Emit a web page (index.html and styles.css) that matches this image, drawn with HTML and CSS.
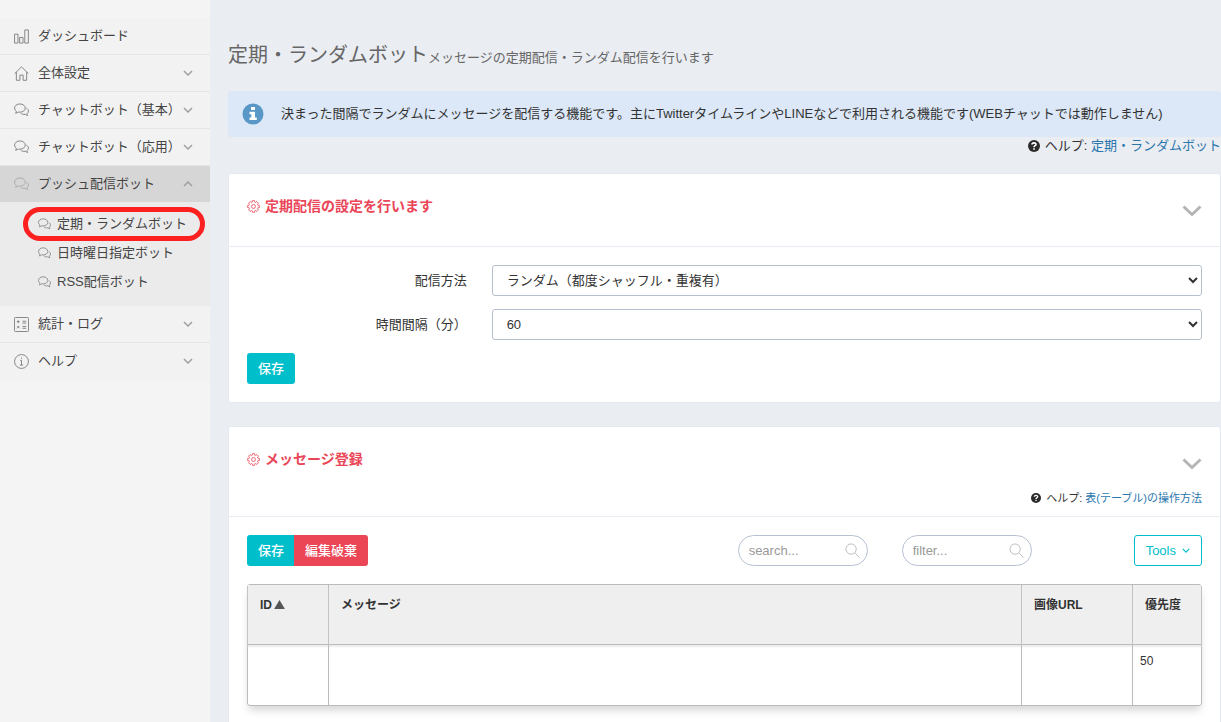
FILE: index.html
```html
<!DOCTYPE html>
<html lang="ja">
<head>
<meta charset="utf-8">
<meta name="viewport" content="width=device-width, initial-scale=1">
<title>定期・ランダムボット</title>
<link rel="stylesheet" href="styles.css">
</head>
<body>
<svg class="defs" aria-hidden="true">
  <symbol id="i-bubbles" viewBox="0 0 16 16"><path d="M6.3 1c3.200 0 5.700 1.900 5.700 4.400s-2.500 4.400-5.700 4.400c-.6 0-1.200-.1-1.700-.2-.8.700-1.800 1.200-3 1.300.5-.6.800-1.300.900-2.100C1.300 8 .6 6.800.6 5.400.600 2.900 3.100 1 6.300 1z"/><path d="M13.200 5.600c1.300.6 2.200 1.700 2.200 3 0 1-.6 2-1.500 2.600 0 .8.300 1.500.8 2-1.100-.1-2-.5-2.700-1.100-1.900.3-3.800-.2-4.900-1.400"/></symbol>
  <symbol id="i-down" viewBox="0 0 10 6"><path d="M1 1l4 4 4-4"/></symbol>
  <symbol id="i-up" viewBox="0 0 10 6"><path d="M1 5l4-4 4 4"/></symbol>
  <symbol id="i-toggle" viewBox="0 0 20 12"><path d="M1.500 1.500l8.500 8 8.500-8"/></symbol>
  <symbol id="i-gear" viewBox="0 0 16 16"><path d="M6.600.83L9.400.83 9.600 2.740 10.590 3.150 12.080 1.940 14.060 3.920 12.850 5.410 13.260 6.400 15.170 6.600 15.170 9.400 13.260 9.600 12.850 10.590 14.060 12.080 12.080 14.060 10.590 12.850 9.600 13.260 9.400 15.170 6.600 15.170 6.400 13.260 5.410 12.850 3.920 14.060 1.940 12.080 3.150 10.590 2.740 9.600.83 9.400.83 6.600 2.740 6.400 3.150 5.410 1.940 3.920 3.920 1.940 5.410 3.150 6.400 2.740z"/><circle cx="8" cy="8" r="2.400"/></symbol>
  <symbol id="i-search" viewBox="0 0 16 16"><circle cx="6.500" cy="6.500" r="5.500"/><path d="M10.500 10.500L15.500 15.500"/></symbol>
  <symbol id="i-help" viewBox="0 0 12 12"><circle cx="6" cy="6" r="6" fill="#2b2b2b"/><path d="M4 4.600C4 2.300 8 2.300 8 4.500 8 5.700 6 5.700 6 7.200" fill="none" stroke="#fff" stroke-width="1.600"/><path d="M5.200 8.200h1.600v1.500H5.200z" fill="#fff"/></symbol>
</svg>
<div class="layout">
  <nav class="sidebar">
    <ul class="menu">
      <li><a class="item" href="#"><svg class="icon" viewBox="0 0 16 16"><path d="M.6 5.500h3.600v9.500H.6zM6 9h3.600v6H6zM11.500 1h3.800v14h-3.800z"/></svg><span>ダッシュボード</span></a></li>
      <li><a class="item" href="#"><svg class="icon" viewBox="0 0 16 16"><path d="M.7 8L8 .9 15.300 8M2.500 6.500v8.700h3.800V9.700h3.400v5.500h3.800V6.500"/></svg><span>全体設定</span><svg class="arrow"><use href="#i-down"/></svg></a></li>
      <li><a class="item" href="#"><svg class="icon"><use href="#i-bubbles"/></svg><span>チャットボット（基本）</span><svg class="arrow"><use href="#i-down"/></svg></a></li>
      <li><a class="item" href="#"><svg class="icon"><use href="#i-bubbles"/></svg><span>チャットボット（応用）</span><svg class="arrow"><use href="#i-down"/></svg></a></li>
      <li class="open"><a class="item" href="#"><svg class="icon"><use href="#i-bubbles"/></svg><span>プッシュ配信ボット</span><svg class="arrow"><use href="#i-up"/></svg></a>
        <ul class="submenu">
          <li><a class="subitem current" href="#"><svg class="icon"><use href="#i-bubbles"/></svg><span>定期・ランダムボット</span></a></li>
          <li><a class="subitem" href="#"><svg class="icon"><use href="#i-bubbles"/></svg><span>日時曜日指定ボット</span></a></li>
          <li><a class="subitem" href="#"><svg class="icon"><use href="#i-bubbles"/></svg><span>RSS配信ボット</span></a></li>
        </ul>
      </li>
      <li><a class="item" href="#"><svg class="icon" viewBox="0 0 16 16"><rect x=".5" y=".5" width="15" height="15" rx="1"/><path d="M3 5h3M4.500 3.500v3M9 4.500h4M9 6.500h4M3.300 9.500l2.500 2.500M5.800 9.500L3.300 12M9 10h4M9 12h4"/></svg><span>統計・ログ</span><svg class="arrow"><use href="#i-down"/></svg></a></li>
      <li><a class="item" href="#"><svg class="icon" viewBox="0 0 16 16"><circle cx="8" cy="8" r="7.400"/><path d="M6.500 6.800H8v5M6.300 11.800h3.500M8 3.800v1.300"/></svg><span>ヘルプ</span><svg class="arrow"><use href="#i-down"/></svg></a></li>
    </ul>
  </nav>
  <main class="main">
    <h1 class="title">定期・ランダムボット<small>メッセージの定期配信・ランダム配信を行います</small></h1>
    <div class="note">
      <svg class="note-icon" viewBox="0 0 22 22"><circle cx="11" cy="11" r="10.500" fill="#5897c6"/><path d="M9 4h4v3H9zM7.500 8.700H13v5.800h1.800V17H7.500v-2.500h1.800v-3.300H7.500z" fill="#fff"/></svg>
      <p>決まった間隔でランダムにメッセージを配信する機能です。主にTwitterタイムラインやLINEなどで利用される機能です(WEBチャットでは動作しません)</p>
    </div>
    <p class="help"><svg class="help-icon"><use href="#i-help"/></svg><span>ヘルプ: <a href="#">定期・ランダムボット</a></span></p>

    <section class="card">
      <header class="card-head">
        <h2><svg class="gear"><use href="#i-gear"/></svg>定期配信の設定を行います</h2>
        <button class="toggle" type="button" aria-label="折りたたむ"><svg><use href="#i-toggle"/></svg></button>
      </header>
      <form class="card-body">
        <div class="field"><label for="method">配信方法</label><select id="method"><option>ランダム（都度シャッフル・重複有）</option></select></div>
        <div class="field"><label for="interval">時間間隔（分）</label><select id="interval"><option>60</option></select></div>
        <button class="btn save" type="button">保存</button>
      </form>
    </section>

    <section class="card last">
      <header class="card-head">
        <h2><svg class="gear"><use href="#i-gear"/></svg>メッセージ登録</h2>
        <button class="toggle" type="button" aria-label="折りたたむ"><svg><use href="#i-toggle"/></svg></button>
        <p class="help small"><svg class="help-icon"><use href="#i-help"/></svg><span>ヘルプ: <a href="#">表(テーブル)の操作方法</a></span></p>
      </header>
      <div class="card-body">
        <div class="toolbar">
          <div class="group"><button class="btn save" type="button">保存</button><button class="btn discard" type="button">編集破棄</button></div>
          <div class="searches">
            <label class="search"><input type="text" placeholder="search..." aria-label="search"><svg><use href="#i-search"/></svg></label>
            <label class="search"><input type="text" placeholder="filter..." aria-label="filter"><svg><use href="#i-search"/></svg></label>
          </div>
          <button class="btn tools" type="button">Tools<svg><use href="#i-down"/></svg></button>
        </div>
        <table class="grid">
          <colgroup><col class="c-id"><col><col class="c-url"><col class="c-pri"></colgroup>
          <thead><tr><th>ID<svg class="sort" viewBox="0 0 12 10"><path d="M6 0l6 10H0z"/></svg></th><th>メッセージ</th><th>画像URL</th><th>優先度</th></tr></thead>
          <tbody><tr><td></td><td></td><td></td><td>50</td></tr></tbody>
        </table>
      </div>
    </section>
  </main>
</div>
</body>
</html>
```
FILE: styles.css
```css
* { box-sizing: border-box; }
body {
  margin: 0;
  background: #eaedf2;
  color: #333;
  font: 13px/20px "Liberation Sans", "Noto Sans CJK JP", sans-serif;
}
ul, p, h1, h2 { margin: 0; padding: 0; list-style: none; }
a { color: #2a76ad; text-decoration: none; }
svg { flex: none; }
button, input, select { font: inherit; color: inherit; }
.defs { position: absolute; width: 0; height: 0; }
.layout { display: flex; min-height: 100vh; }

.sidebar { flex: none; width: 210px; padding-top: 18px; background: #f4f4f4; }
.menu > li { border-bottom: 1px solid #e6e6e6; background: #f2f2f2; }
.menu > li.open, .menu > li:last-child { border-bottom-color: transparent; }
.item { display: flex; align-items: center; height: 36px; padding: 0 17px 0 14px; color: #444; }
.icon { width: 15px; height: 15px; margin-right: 9px; fill: none; stroke: #808080; stroke-width: 1; }
.arrow { width: 10px; height: 6px; margin-left: auto; fill: none; stroke: #a0a0a0; stroke-width: 1.5; }
.open > .item { background: #d6d6d6; }
.open > .item .icon { stroke: #aaa; }
.submenu { display: grid; gap: 9px; padding: 12px 0 13px 38px; background: #ebebeb; }
.menu > li.open { background: #ebebeb; }
.subitem { position: relative; display: flex; align-items: center; width: max-content; color: #444; }
.subitem .icon { width: 13px; height: 13px; margin-right: 6px; }
.current::after {
  content: "";
  position: absolute;
  inset: -7px -18px -7px -15px;
  border: 5px solid #fc2020;
  border-radius: 17px;
}

.main { flex: 1; min-width: 0; display: flex; flex-direction: column; padding: 40px 0 0 18px; }
.title { color: #666; font-size: 20px; line-height: 30px; font-weight: 400; }
.title small { font-size: 13px; }
.note { display: flex; align-items: center; gap: 17px; margin-top: 18px; padding: 12px 14px; border-radius: 3px; background: #dce8f7; line-height: 22px; }
.note-icon { width: 22px; height: 22px; }
.help { display: flex; justify-content: flex-end; align-items: center; gap: 5px; line-height: 18px; }
.help-icon { width: 12px; height: 12px; }
.small { font-size: 11px; }
.small .help-icon { width: 10px; height: 10px; }

.card { margin-top: 18px; border: 1px solid #e5eaf1; border-radius: 3px; background: #fff; }
.last { flex: 1; margin-top: 23px; border-bottom: 0; border-radius: 3px 3px 0 0; }
.card-head { display: grid; grid-template-columns: 1fr auto; min-height: 73px; padding: 21px 18px 9px; border-bottom: 1px solid #e9edf3; align-content: start; }
h2 { display: flex; align-items: center; gap: 5px; color: #ea4658; font-size: 14px; line-height: 20px; }
.gear { width: 13px; height: 13px; fill: none; stroke: #ea4658; stroke-width: 1; }
.toggle { height: 22px; padding: 10px 0 0; border: 0; background: none; line-height: 0; }
.toggle svg { width: 20px; height: 12px; fill: none; stroke: #b5b5b5; stroke-width: 3; }
.card-head .help { grid-column: 1 / -1; margin-top: 19px; }
.card-body { padding: 18px; }
.field { display: flex; align-items: center; gap: 25px; margin-bottom: 13px; }
.field label { width: 23%; text-align: right; }
.field select { flex: 1; min-width: 0; height: 31px; padding: 0 0 0 10px; border: 1px solid #b5bfcd; border-radius: 3px; background: #fff; }
.btn { height: 31px; padding: 0 11px; border: 0; border-radius: 3px; color: #fff; }
.save { background: #00bfcb; font-weight: 500; }
.discard { background: #eb4656; font-weight: 500; }
.toolbar { display: flex; align-items: center; }
.group { display: flex; margin-right: auto; }
.group .save { border-radius: 3px 0 0 3px; }
.group .discard { margin-left: -1px; border-radius: 0 3px 3px 0; }
.searches { display: flex; gap: 34px; margin-right: 102px; }
.search { position: relative; width: 130px; }
.search input { display: block; width: 100%; height: 31px; padding: 0 34px 0 10px; border: 1px solid #b7c1d2; border-radius: 16px; background: #fff; }
.search input::placeholder { color: #999; opacity: 1; }
.search svg { position: absolute; right: 8px; top: 8px; width: 15px; height: 15px; fill: none; stroke: #bbb; stroke-width: 1; }
.tools { display: flex; align-items: center; gap: 6px; border: 1px solid #00bfcb; background: #fff; color: #00bfcb; }
.tools svg { width: 8px; height: 5px; fill: none; stroke: #00bfcb; stroke-width: 1.5; }

.grid { width: 100%; margin-top: 18px; table-layout: fixed; border: 1px solid #bbb; border-radius: 3px; border-spacing: 0; box-shadow: 0 6px 8px -2px #d4d4d4; font-size: 12px; }
.c-id { width: 81px; }
.c-url { width: 111px; }
.c-pri { width: 68px; }
.grid th, .grid td { height: 60px; vertical-align: top; text-align: left; border-right: 1px solid #bbb; }
.grid th { padding: 10px 12px; border-bottom: 1px solid #bbb; background: #efefef; box-shadow: 0 2px 1px #eee; }
.grid td { padding: 6px 7px; }
.grid th:last-child, .grid td:last-child { border-right: 0; }
.sort { width: 11px; height: 9px; margin-left: 2px; fill: #555; }
```
